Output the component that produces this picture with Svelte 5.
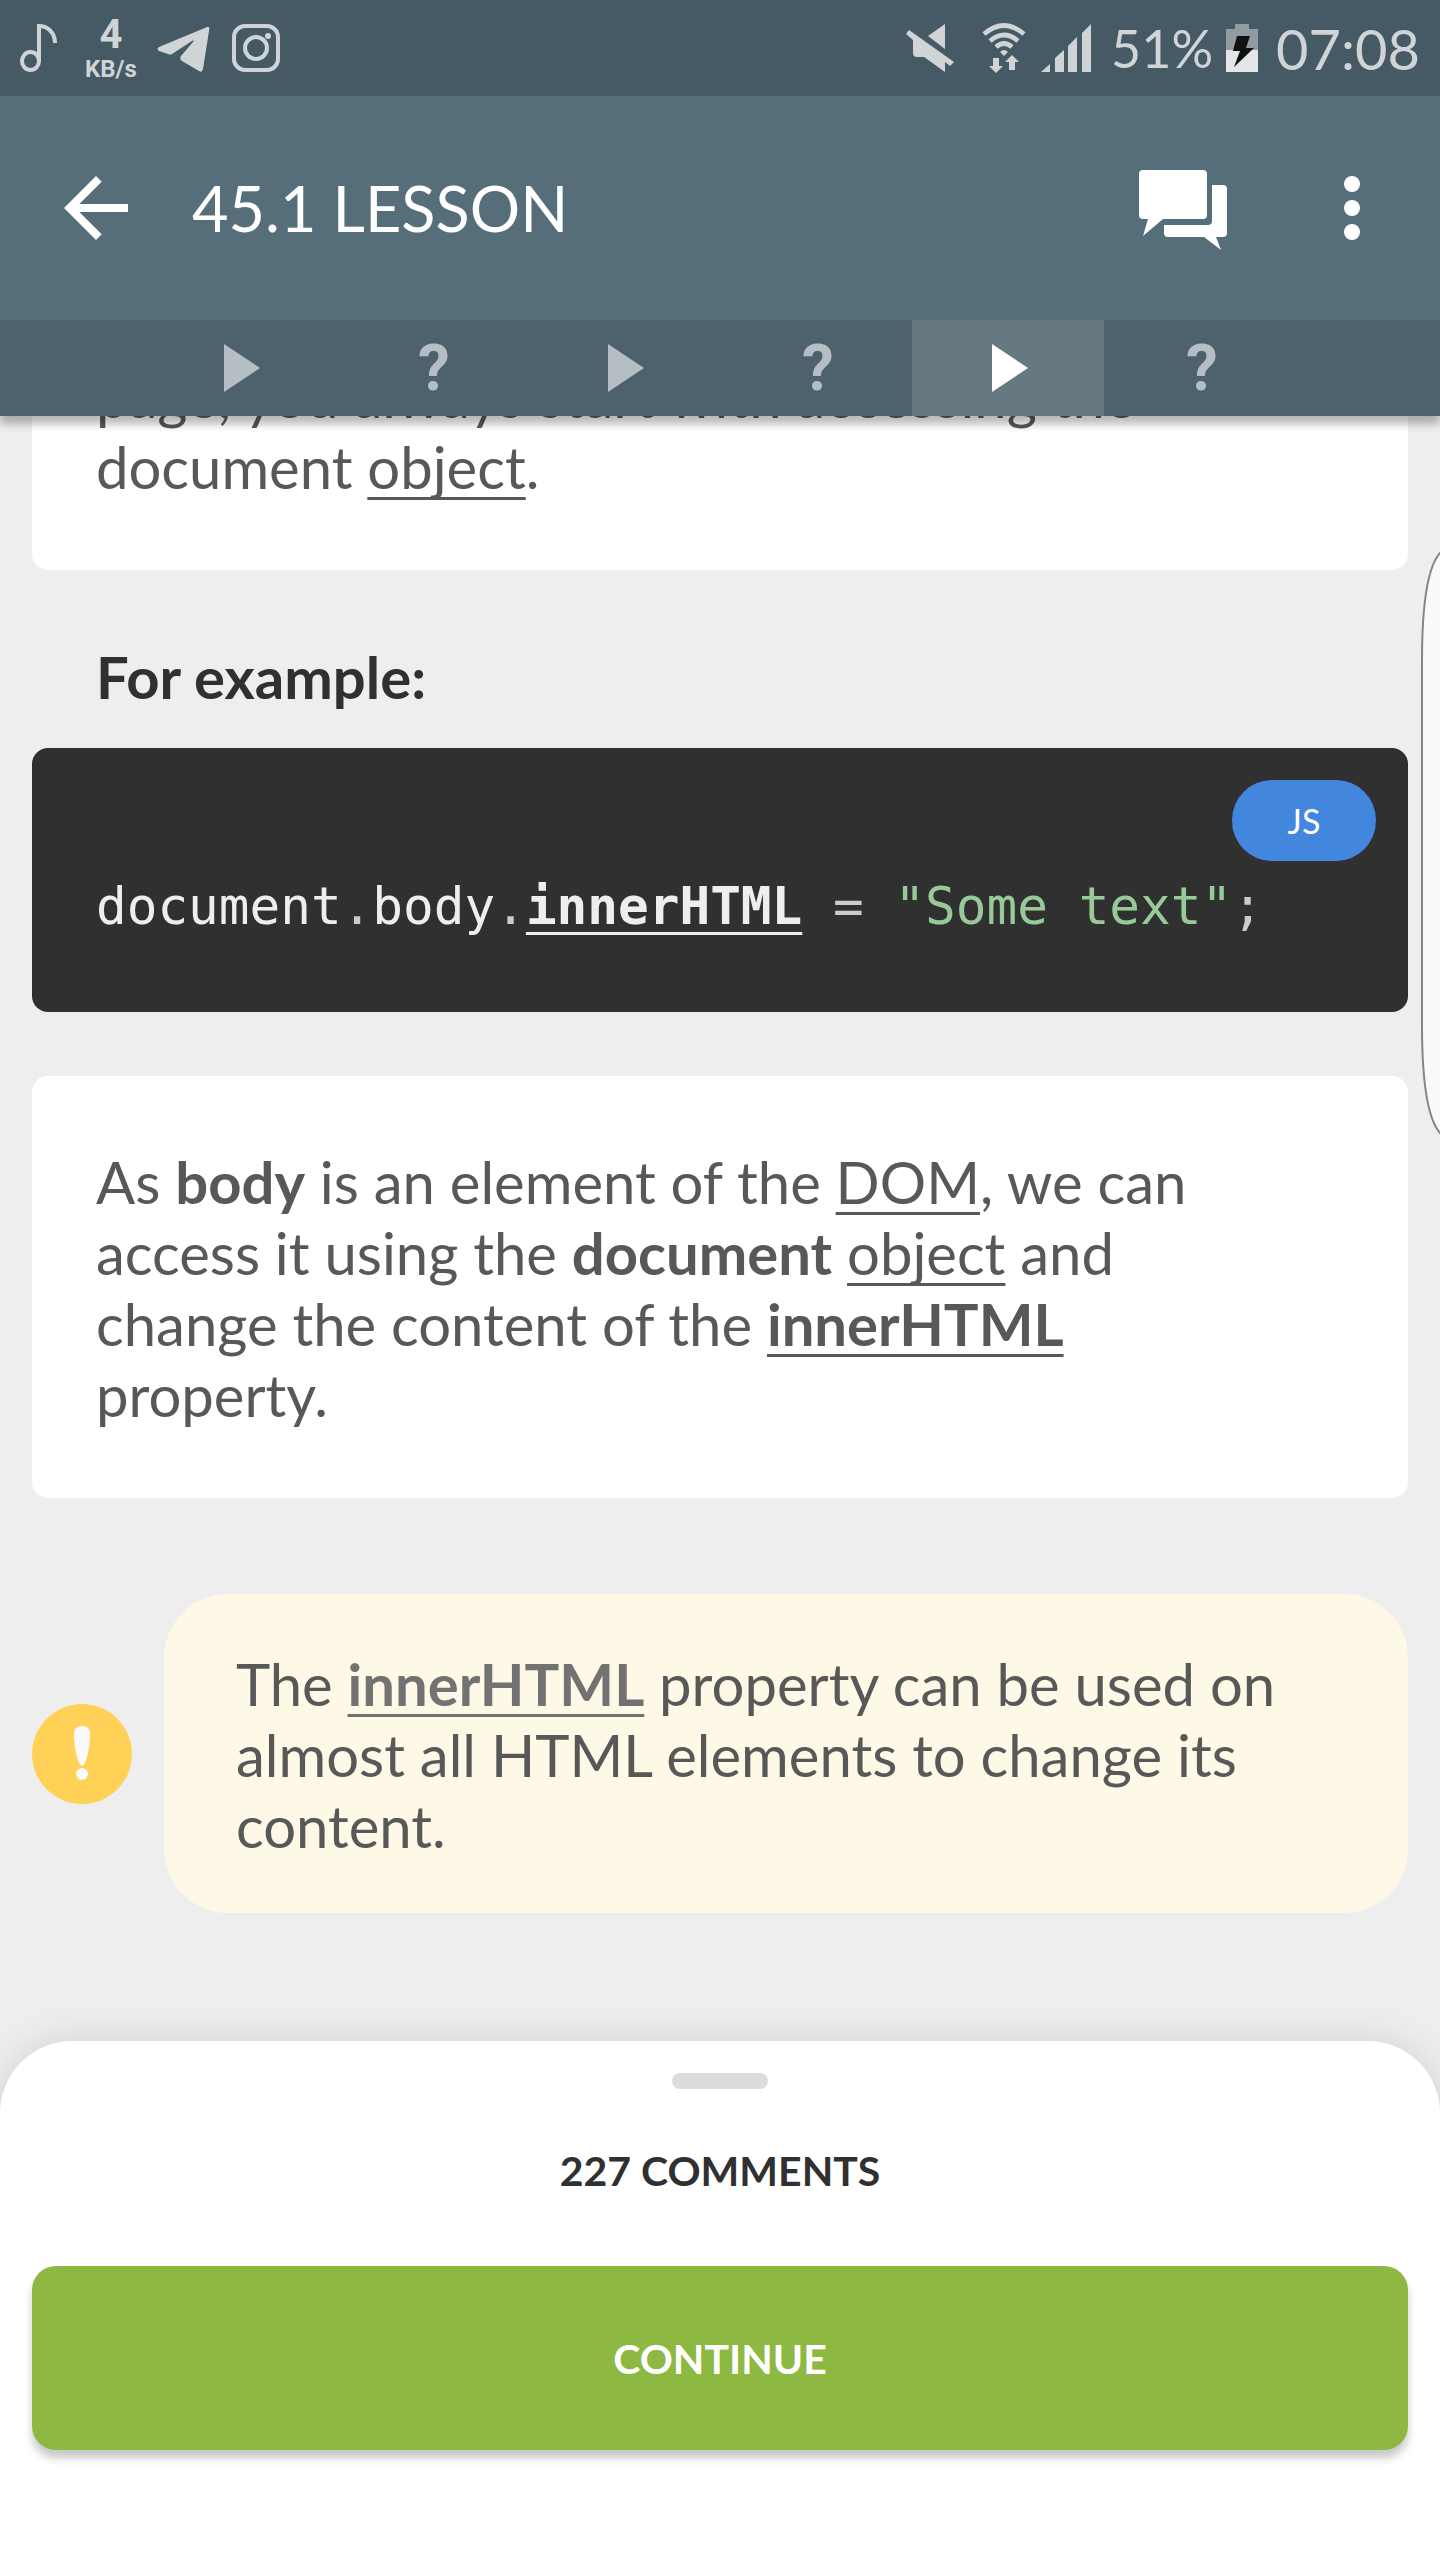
<script>
  const steps = ['play', 'quiz', 'play', 'quiz', 'play', 'quiz'];
  let current = $state(4);
</script>

<div class="page">
  <div class="status">
    <div class="group left">
      <svg class="note-icon" viewBox="0 0 38 48" width="38" height="48" aria-hidden="true">
        <ellipse cx="10.500" cy="37" rx="8.500" ry="9" fill="none" stroke="currentColor" stroke-width="4" />
        <path d="M19 38V2c9 0 16 7 16 17" fill="none" stroke="currentColor" stroke-width="4" />
      </svg>
      <div class="speed"><b>4</b><span>KB/s</span></div>
      <svg class="plane" viewBox="0 0 53 48" width="53" height="48" aria-hidden="true">
        <path d="M49.500 3.200q3-1.500 2.800 1.800L46 45q-1 4-4 2L25 37q-3-2-1-5L36 18q2-3-1-1L15 30q-2 1-4 0L2 27q-3-2 0-4z" fill="currentColor" />
      </svg>
      <svg viewBox="0 0 48 48" width="48" height="48" aria-hidden="true">
        <rect x="2" y="2" width="44" height="44" rx="11" fill="none" stroke="currentColor" stroke-width="4" />
        <circle cx="24" cy="24" r="11" fill="none" stroke="currentColor" stroke-width="4" />
        <circle cx="36" cy="12" r="3" fill="currentColor" />
      </svg>
    </div>
    <div class="group right">
      <svg viewBox="0 0 48 48" width="48" height="48" aria-hidden="true">
        <path d="M39 0v25L22 12zM3 6l45 32-4 4-5-4v10L18 33h-7q-4 0-4-4V16L0 10z" fill="currentColor" />
      </svg>
      <svg class="wifi" viewBox="0 0 44 50" width="44" height="50" aria-hidden="true">
        <g fill="none" stroke="currentColor" stroke-width="4.600">
          <path d="M2 11q20-17 40 0" />
          <path d="M8 18q14-12 28 0" />
          <path d="M14 24q8-7 16 0" />
        </g>
        <path d="M18 29q4-4 8 0l-4 4zM11 35h6v8h4l-7 7-7-7h4zM27 47v-8h-4l7-7 7 7h-4v8z" fill="currentColor" />
      </svg>
      <svg viewBox="0 0 50 48" width="50" height="48" aria-hidden="true">
        <path d="M0 48l9-8v8zM14 34l9-8v22h-9zM27 22l9-9v35h-9zM41 9l9-9v48h-9z" fill="currentColor" />
      </svg>
      <span class="percent">51%</span>
      <svg class="battery" viewBox="0 0 32 48" width="32" height="48" aria-hidden="true">
        <path d="M9 0h14v5h9v22H0V5h9z" fill="#919ca2" />
        <path d="M0 26h32v22H0z" fill="#e2e6e9" />
        <path d="M11 12h13l-4 12h8L8 43l6-16H7z" fill="#111" />
      </svg>
      <span class="clock">07:08</span>
    </div>
  </div>

  <header class="appbar">
    <button class="icon-btn" aria-label="Back">
      <svg viewBox="0 0 24 24" width="96" height="96"><path d="M20 11H7.830l5.590-5.590L12 4l-8 8 8 8 1.410-1.410L7.830 13H20z" fill="currentColor" /></svg>
    </button>
    <h1>45.1 LESSON</h1>
    <button class="icon-btn chat" aria-label="Comments">
      <svg viewBox="0 0 88 82" width="88" height="82">
        <path d="M4 1h60q4 0 4 4v41q0 4-4 4H24L4 67l5-17H4q-4 0-4-4V5q0-4 4-4z" fill="currentColor" />
        <path d="M73 16h11q4 0 4 4v44q0 4-4 4h-7l5 13-17-13H29q-4 0-4-4v-8h44q4 0 4-4z" fill="currentColor" />
      </svg>
    </button>
    <button class="icon-btn" aria-label="More options">
      <svg viewBox="0 0 24 24" width="96" height="96"><g fill="currentColor"><circle cx="12" cy="6" r="2" /><circle cx="12" cy="12" r="2" /><circle cx="12" cy="18" r="2" /></g></svg>
    </button>
  </header>

  <nav class="steps" aria-label="Lesson steps">
    {#each steps as kind, i}
      <button class:active={i === current} aria-label="Step {i + 1}" onclick={() => (current = i)}>
        {#if kind === 'play'}
          <svg viewBox="0 0 36 48" width="36" height="48"><path d="M0 0l36 24L0 48z" fill="currentColor" /></svg>
        {:else}
          ?
        {/if}
      </button>
    {/each}
  </nav>

  <main>
    <section class="card scrolled">
      <p>page, you always start with accessing the<br />document <a href="#object">object</a>.</p>
    </section>

    <h2>For example:</h2>

    <section class="code">
      <span class="lang">JS</span>
      <pre><code>document<i>.</i>body<i>.</i><a href="#innerHTML">innerHTML</a> <i>=</i> <q>"Some text"</q><i>;</i></code></pre>
    </section>

    <section class="card">
      <p>
        As <b>body</b> is an element of the <a href="#dom">DOM</a>, we can<br />
        access it using the <b>document</b> <a href="#object">object</a> and<br />
        change the content of the <a class="strong" href="#innerHTML">innerHTML</a><br />
        property.
      </p>
    </section>

    <aside>
      <svg viewBox="0 0 100 100" width="100" height="100" aria-hidden="true">
        <circle cx="50" cy="50" r="50" fill="#ffd257" />
        <path d="M50 22q9 0 8 11-1 17-5 26-3 6-6 0-4-9-5-26-1-11 8-11z" fill="#fafafa" />
        <circle cx="50" cy="70" r="6" fill="#fafafa" />
      </svg>
      <p>
        The <a class="strong soft" href="#innerHTML">innerHTML</a> property can be used on<br />
        almost all HTML elements to change its<br />
        content.
      </p>
    </aside>
  </main>

  <footer>
    <div class="grip"></div>
    <button class="comments">227 COMMENTS</button>
    <button class="continue">CONTINUE</button>
  </footer>

  <svg class="edge" viewBox="0 0 20 584" width="20" height="584" aria-hidden="true">
    <path d="M21 1Q2 20 2 110V474Q2 564 21 583" fill="#fafafa" stroke="#858585" stroke-width="2" />
  </svg>
</div>

<style>
  :global(body) {
    background: #eee;
  }
  .page {
    position: relative;
    display: flex;
    flex-direction: column;
    min-height: 100vh;
    overflow: hidden;
    background: #eee;
    color: #585858;
    font-family: Lato, "Open Sans", sans-serif;
    font-size: 58px;
    line-height: 71px;
  }
  svg {
    display: block;
    flex: none;
  }
  button {
    border: 0;
    padding: 0;
    background: none;
    color: inherit;
    font: inherit;
    cursor: pointer;
  }
  h1,
  h2,
  p,
  pre {
    margin: 0;
  }
  a {
    color: inherit;
    text-decoration: underline;
    text-decoration-thickness: 3px;
    text-decoration-skip-ink: none;
    text-underline-offset: 8px;
  }
  b,
  .strong {
    font-weight: 700;
  }

  .status {
    display: flex;
    justify-content: space-between;
    align-items: center;
    height: 96px;
    padding: 0 20px;
    background: #465a65;
    color: #d0d4d7;
  }
  .group {
    display: flex;
    align-items: center;
  }
  .speed {
    display: flex;
    flex-direction: column;
    align-items: center;
    margin: 0 20px 0 27px;
    font-family: Roboto, sans-serif;
    font-weight: 700;
    font-size: 24px;
    line-height: 26px;
  }
  .speed b {
    font-size: 40px;
    line-height: 42px;
  }
  .plane {
    margin-right: 22px;
  }
  .wifi {
    margin: 0 15px 0 28px;
  }
  .percent {
    margin-left: 20px;
    font-size: 52px;
  }
  .clock {
    font-size: 56px;
  }
  .battery {
    margin: 0 18px 0 13px;
  }

  .appbar {
    display: flex;
    align-items: center;
    height: 224px;
    padding: 0 40px 0 48px;
    background: #566e7a;
    color: #fff;
  }
  .appbar h1 {
    flex: 1;
    margin-left: 48px;
    font-size: 63px;
    font-weight: 400;
    line-height: 76px;
  }
  .chat {
    margin: 4px 77px 0 0;
  }

  .steps {
    position: relative;
    display: grid;
    grid-template-columns: repeat(6, 1fr);
    height: 96px;
    padding: 0 10%;
    background: #4d626d;
    box-shadow: 0 8px 8px rgba(0, 0, 0, 0.28);
    color: #b5bec4;
    font-family: Roboto, sans-serif;
    font-size: 64px;
    font-weight: 700;
  }
  .steps button {
    display: flex;
    align-items: center;
    justify-content: center;
    padding-left: 4px;
  }
  .steps .active {
    background: #667981;
    color: #fff;
  }

  main {
    display: flex;
    flex: 1;
    flex-direction: column;
    overflow: hidden;
    padding: 0 32px;
  }
  .card {
    padding: 70px 64px 68px;
    border-radius: 16px;
    background: #fff;
  }
  .scrolled {
    margin-top: -126px;
  }
  h2 {
    padding: 71px 64px 35px;
    color: #303030;
    font-size: 58px;
    line-height: 72px;
  }
  .code {
    display: flex;
    flex-direction: column;
    margin-bottom: 64px;
    padding: 32px 32px 70px 64px;
    border-radius: 16px;
    background: #303030;
    color: #eee;
  }
  .lang {
    align-self: flex-end;
    width: 144px;
    border-radius: 40px;
    background: #4386de;
    color: #fff;
    font-size: 34px;
    line-height: 81px;
    text-align: center;
  }
  .code pre {
    margin-top: 8px;
    line-height: 70px;
  }
  .code code {
    font-family: "DejaVu Sans Mono", monospace;
    font-size: 51px;
  }
  .code a {
    font-weight: 700;
  }
  .code i {
    color: #ccc;
    font-style: normal;
  }
  .code q {
    color: #98ca98;
    quotes: none;
  }

  aside {
    display: flex;
    align-items: center;
    gap: 32px;
    margin: 96px 0 128px;
  }
  aside p {
    flex: 1;
    padding: 54px 72px 52px;
    border-radius: 64px;
    background: #fef8e6;
  }
  .soft {
    color: #727272;
  }

  footer {
    position: relative;
    display: flex;
    flex-direction: column;
    align-items: center;
    padding: 32px 32px 111px;
    border-radius: 72px 72px 0 0;
    background: #fff;
    box-shadow: 0 0 40px rgba(0, 0, 0, 0.12);
    font-size: 41px;
    font-weight: 700;
  }
  .grip {
    width: 96px;
    height: 16px;
    border-radius: 8px;
    background: #dcdcdc;
  }
  .comments {
    margin: 50px 0 63px;
    color: #303030;
    line-height: 64px;
  }
  .continue {
    align-self: stretch;
    height: 184px;
    border-radius: 24px;
    background: #8db841;
    box-shadow: 0 8px 8px rgba(0, 0, 0, 0.22);
    color: #fff;
  }

  .edge {
    position: absolute;
    top: 551px;
    right: 0;
  }
</style>
